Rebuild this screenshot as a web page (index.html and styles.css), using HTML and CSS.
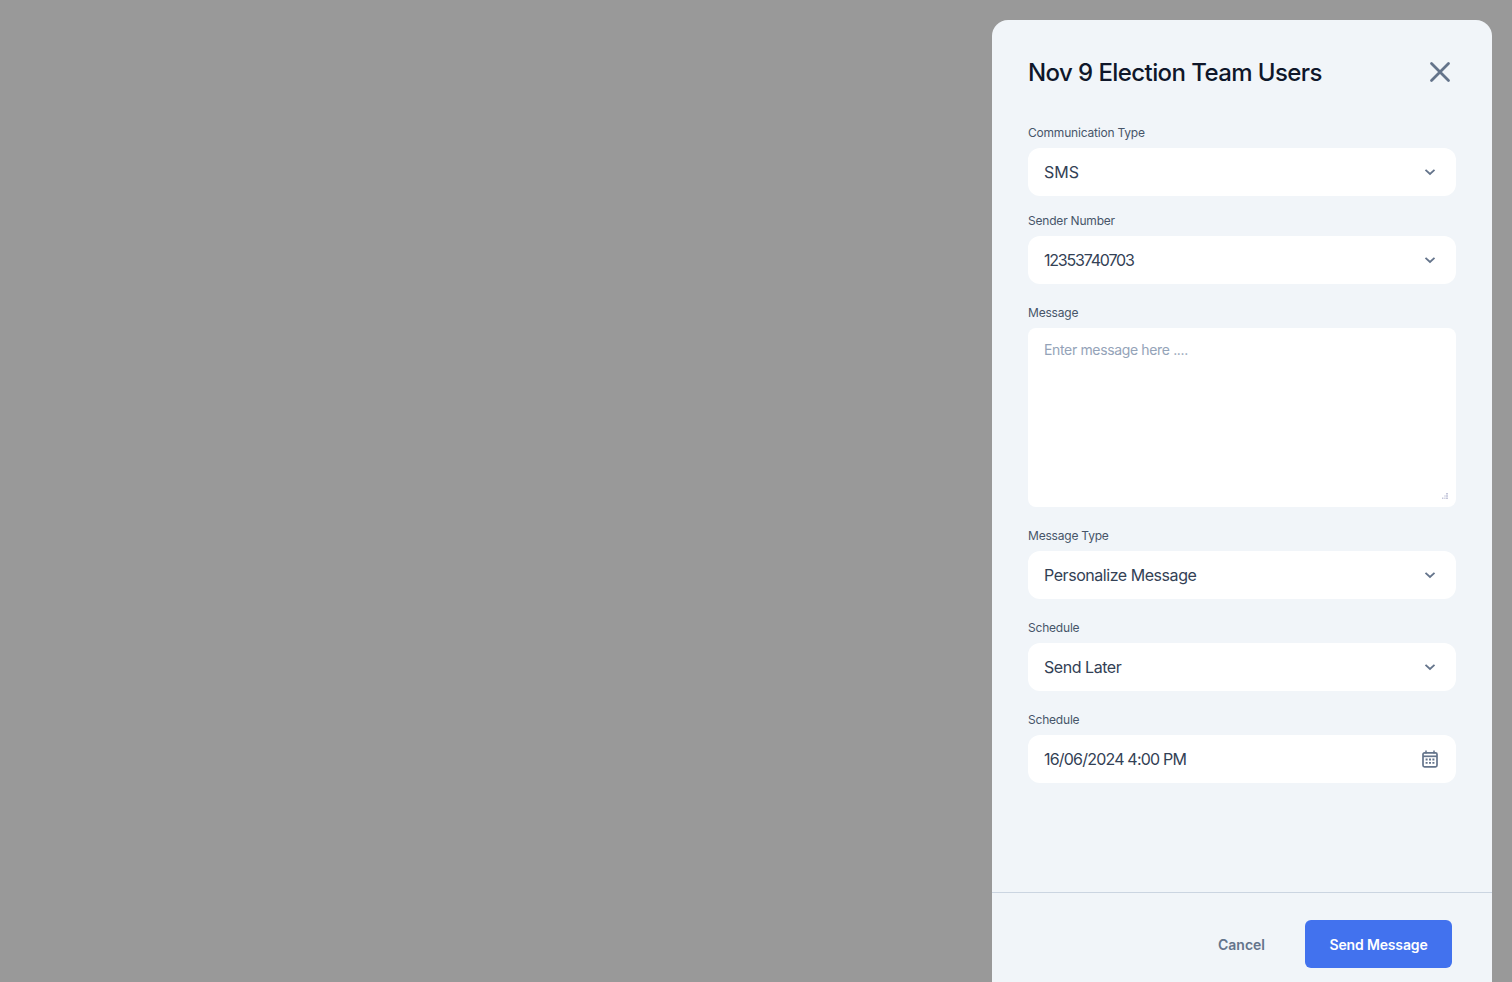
FILE: index.html
```html
<!DOCTYPE html>
<html lang="en">

<head>
    <meta charset="UTF-8">
    <meta name="viewport" content="width=device-width, initial-scale=1.0">
    <title>Nov 9 Election Team Users</title>
    <link rel="stylesheet" href="styles.css">
</head>

<body>
    <div class="overlay">
        <aside class="panel">
            <div class="panelHead">
                <h2 class="panelTitle">Nov 9 Election Team Users</h2>
                <button class="closeButton" title="Close">
                    <svg width="24" height="24" viewBox="0 0 24 24" fill="none" stroke="#64748b" stroke-width="2.8" stroke-linecap="round">
                        <path d="M3.5 3.5 20.5 20.5M20.5 3.5 3.5 20.5" />
                    </svg>
                </button>
            </div>

            <form class="panelForm">
                <div class="formGroup firstGroup">
                    <label class="formLabel">Communication Type</label>
                    <div class="formField">
                        <span class="smsValue">SMS</span>
                        <svg class="chevron" width="12" height="8" viewBox="0 0 12 8" fill="none" stroke="#64748b" stroke-width="1.8"><path d="M1.5 1.8 6 6l4.5-4.2" /></svg>
                    </div>
                </div>
                <div class="formGroup senderGroup">
                    <label class="formLabel">Sender Number</label>
                    <div class="formField">
                        <span class="phoneValue">12353740703</span>
                        <svg class="chevron" width="12" height="8" viewBox="0 0 12 8" fill="none" stroke="#64748b" stroke-width="1.8"><path d="M1.5 1.8 6 6l4.5-4.2" /></svg>
                    </div>
                </div>
                <div class="formGroup">
                    <label class="formLabel" for="message">Message</label>
                    <div class="messageWrap">
                        <textarea class="messageBox" id="message" placeholder="Enter message here ...."></textarea>
                        <svg class="resizeGrip" width="6" height="6" viewBox="0 0 6 6" fill="#c4c6da">
                            <path d="M4 0h2v1.4H4zM4 2.3h2v1.4H4zM4 4.6h2V6H4zM0 4.6h1.4V6H0zM2.3 4.6h1.2V6H2.3z" />
                            <path d="M2 2h2v2H2z" fill="#e6e7f0" />
                        </svg>
                    </div>
                </div>
                <div class="formGroup">
                    <label class="formLabel">Message Type</label>
                    <div class="formField">
                        <span>Personalize Message</span>
                        <svg class="chevron" width="12" height="8" viewBox="0 0 12 8" fill="none" stroke="#64748b" stroke-width="1.8"><path d="M1.5 1.8 6 6l4.5-4.2" /></svg>
                    </div>
                </div>
                <div class="formGroup">
                    <label class="formLabel">Schedule</label>
                    <div class="formField">
                        <span>Send Later</span>
                        <svg class="chevron" width="12" height="8" viewBox="0 0 12 8" fill="none" stroke="#64748b" stroke-width="1.8"><path d="M1.5 1.8 6 6l4.5-4.2" /></svg>
                    </div>
                </div>
                <div class="formGroup">
                    <label class="formLabel">Schedule</label>
                    <div class="formField">
                        <span class="dateValue">16/06/2024 4:00 PM</span>
                        <svg width="16" height="18" viewBox="0 0 16 18" fill="none">
                            <rect x="1" y="2.8" width="14" height="14" rx="1.5" stroke="#64748b" stroke-width="1.7" />
                            <path d="M1 6.3h14" stroke="#64748b" stroke-width="1.7" />
                            <path d="M4 .6v3M12 .6v3" stroke="#64748b" stroke-width="1.5" />
                            <path d="M3.6 8.6h2v1.8h-2zM7 8.6h2v1.8H7zM10.4 8.6h2v1.8h-2zM3.6 12h2v1.8h-2zM7 12h2v1.8H7zM10.4 12h2v1.8h-2z" fill="#64748b" />
                        </svg>
                    </div>
                </div>
            </form>

            <div class="panelFoot">
                <button class="cancelButton">Cancel</button>
                <button class="sendButton">Send Message</button>
            </div>
        </aside>
    </div>
</body>

</html>
```

FILE: styles.css
```css
* {
    box-sizing: border-box;
}

body {
    margin: 0;
    font-family: Inter, "Noto Sans", sans-serif;
    background-color: #999;
    overflow: hidden;
}

.overlay {
    height: 982px;
    padding: 20px 20px 0;
    display: flex;
    justify-content: flex-end;
}

.panel {
    width: 500px;
    display: flex;
    flex-direction: column;
    background-color: #f1f5f9;
    border-radius: 16px 16px 0 0;
}

.panelHead {
    display: flex;
    justify-content: space-between;
    align-items: center;
    height: 104px;
    padding: 0 40px 0 36px;
}

.panelTitle {
    margin: 2px 0 0;
    font-size: 24px;
    line-height: 32px;
    font-weight: 500;
    letter-spacing: -0.58px;
    color: #0f172a;
}

.closeButton {
    display: flex;
    width: 24px;
    height: 24px;
    padding: 0;
    border: none;
    background: none;
    cursor: pointer;
}

.panelForm {
    flex: 1;
    padding: 0 36px;
}

.formGroup {
    margin-top: 20px;
}

.firstGroup {
    margin-top: 0;
}

.senderGroup {
    margin-top: 16px;
}

.formLabel {
    display: block;
    margin-bottom: 8px;
    padding-top: 1px;
    height: 16px;
    font-size: 12px;
    line-height: 16px;
    letter-spacing: -0.2px;
    color: #475569;
}

.formField {
    display: flex;
    justify-content: space-between;
    align-items: center;
    height: 48px;
    padding: 0 18px 0 16px;
    font-size: 16px;
    letter-spacing: -0.45px;
    color: #334155;
    background-color: #fff;
    border-radius: 12px;
}

.smsValue {
    letter-spacing: 0;
}

.phoneValue {
    letter-spacing: -1.2px;
}

.dateValue {
    letter-spacing: -0.8px;
}

.chevron {
    margin-right: 2px;
}

.messageWrap {
    position: relative;
}

.messageBox {
    display: block;
    width: 100%;
    height: 179px;
    padding: 14px 16px;
    font-family: inherit;
    font-size: 14px;
    line-height: 16px;
    letter-spacing: -0.35px;
    color: #334155;
    background-color: #fff;
    border: none;
    border-radius: 8px;
    outline: none;
    resize: none;
}

.messageBox::placeholder {
    color: #94a3b8;
}

.resizeGrip {
    position: absolute;
    right: 8px;
    bottom: 8px;
}

.panelFoot {
    display: flex;
    justify-content: flex-end;
    align-items: center;
    height: 90px;
    padding: 27px 40px 14px 36px;
    gap: 40px;
    border-top: 1px solid #cbd5e1;
}

.cancelButton,
.sendButton {
    font-family: inherit;
    font-size: 14px;
    font-weight: 600;
    border: none;
    cursor: pointer;
}

.cancelButton {
    padding: 0;
    color: #64748b;
    background: none;
}

.sendButton {
    width: 147px;
    height: 48px;
    letter-spacing: -0.15px;
    color: #fff;
    background-color: #4272ee;
    border-radius: 6px;
}
```
